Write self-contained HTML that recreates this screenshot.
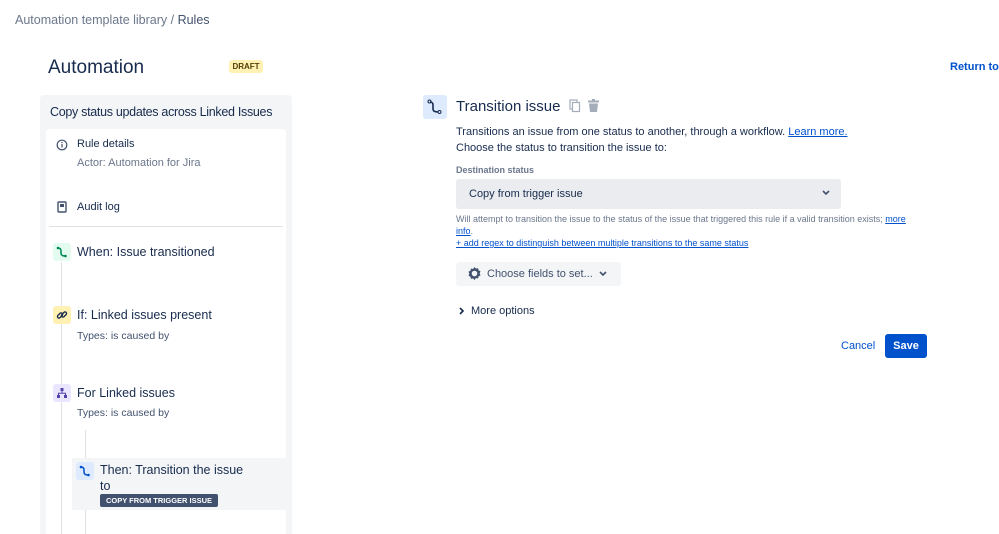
<!DOCTYPE html>
<html><head><style>
*{margin:0;padding:0;box-sizing:border-box}
html,body{width:999px;height:534px;overflow:hidden}
body{background:#fff;font-family:"Liberation Sans",sans-serif;color:#172b4d;position:relative}
.a{position:absolute;white-space:nowrap}
.ic{position:absolute;width:18px;height:18px;border-radius:3px}
</style></head><body>
<div class="a" style="left:15px;top:13px;font-size:12.5px;color:#6b778c">Automation template library / <span style="color:#42526e">Rules</span></div>
<div class="a" style="left:48px;top:57px;font-size:19px;">Automation</div>
<div class="a" style="left:229px;top:60px;width:34px;height:13px;background:#fff0b3;border-radius:3px;font-size:8px;font-weight:bold;text-align:center;line-height:13px;color:#533f04">DRAFT</div>
<div class="a" style="left:950px;top:61px;font-size:11px;color:#0052cc;font-weight:bold">Return to</div>

<div class="a" style="left:40px;top:95px;width:252px;height:450px;background:#f4f5f7;border-radius:4px"></div>
<div class="a" style="left:50px;top:105px;font-size:12.5px;letter-spacing:-0.3px">Copy status updates across Linked Issues</div>
<div class="a" style="left:46px;top:129px;width:240px;height:420px;background:#fff;border-radius:4px"></div>
<div class="a" style="left:49px;top:226px;width:234px;height:1px;background:#dfe1e6"></div>
<div class="a" style="left:61px;top:262px;width:1px;height:280px;background:#dfe1e6"></div>
<div class="a" style="left:85px;top:430px;width:1px;height:110px;background:#dfe1e6"></div>

<svg class="a" style="left:56px;top:139px" width="12" height="12" viewBox="0 0 12 12"><circle cx="6" cy="6" r="4.8" fill="none" stroke="#42526e" stroke-width="1.2"/><rect x="5.4" y="5" width="1.2" height="3.5" fill="#42526e"/><circle cx="6" cy="3.6" r=".7" fill="#42526e"/></svg>
<div class="a" style="left:77px;top:138px;font-size:11px;color:#172b4d">Rule details</div>
<div class="a" style="left:77px;top:157px;font-size:11px;color:#6b778c">Actor: Automation for Jira</div>
<svg class="a" style="left:57px;top:201px" width="10" height="12" viewBox="0 0 10 12"><rect x="1" y="1" width="8" height="10" rx="1" fill="none" stroke="#42526e" stroke-width="1.4"/><rect x="3" y="3" width="4" height="3" fill="#42526e"/></svg>
<div class="a" style="left:77px;top:201px;font-size:11px">Audit log</div>

<div class="ic" style="left:53px;top:243px;background:#e3fcef"></div>
<svg class="a" style="left:56px;top:246px" width="12" height="12" viewBox="0 0 12 12"><path d="M2 2 Q5 2 5 5 L5 7 Q5 10 9 10" fill="none" stroke="#00875a" stroke-width="1.5"/><circle cx="2" cy="2" r="1.3" fill="#00875a"/><circle cx="9.5" cy="10" r="1.3" fill="#00875a"/></svg>
<div class="a" style="left:77px;top:245px;font-size:12.5px">When: Issue transitioned</div>

<div class="ic" style="left:53px;top:306px;background:#fff0b3"></div>
<svg class="a" style="left:56px;top:309px" width="12" height="12" viewBox="0 0 12 12"><g fill="none" stroke="#172b4d" stroke-width="1.3"><rect x="1" y="5" width="6" height="3" rx="1.5" transform="rotate(-45 4 6.5)"/><rect x="5" y="4" width="6" height="3" rx="1.5" transform="rotate(-45 8 5.5)"/></g></svg>
<div class="a" style="left:77px;top:308px;font-size:12.5px">If: Linked issues present</div>
<div class="a" style="left:77px;top:330px;font-size:10.5px;color:#42526e">Types: is caused by</div>

<div class="ic" style="left:53px;top:384px;background:#eae6ff"></div>
<svg class="a" style="left:56px;top:387px" width="12" height="12" viewBox="0 0 12 12"><g fill="#5243aa"><rect x="4.5" y="1" width="3" height="3"/><rect x="1" y="8" width="3" height="3"/><rect x="8" y="8" width="3" height="3"/></g><path d="M6 4V6M2.5 8V6.2H9.5V8" stroke="#5243aa" fill="none"/></svg>
<div class="a" style="left:77px;top:386px;font-size:12.5px">For Linked issues</div>
<div class="a" style="left:77px;top:407px;font-size:10.5px;color:#42526e">Types: is caused by</div>

<div class="a" style="left:72px;top:458px;width:214px;height:52px;background:#f4f5f7"></div>
<div class="ic" style="left:76px;top:462px;background:#deebff"></div>
<svg class="a" style="left:79px;top:465px" width="12" height="12" viewBox="0 0 12 12"><path d="M2 2 Q5 2 5 5 L5 7 Q5 10 9 10" fill="none" stroke="#0052cc" stroke-width="1.5"/><circle cx="2" cy="2" r="1.3" fill="#0052cc"/><circle cx="9.5" cy="10" r="1.3" fill="#0052cc"/></svg>
<div class="a" style="left:100px;top:462px;font-size:12.5px;line-height:16px">Then: Transition the issue<br>to</div>
<div class="a" style="left:100px;top:494px;width:118px;height:13px;background:#42526e;border-radius:2px;color:#fff;font-size:7.5px;font-weight:bold;text-align:center;line-height:13px">COPY FROM TRIGGER ISSUE</div>

<div class="a" style="left:423px;top:95px;width:24px;height:24px;background:#deebff;border-radius:3px"></div>
<svg class="a" style="left:427px;top:99px" width="16" height="16" viewBox="0 0 16 16"><path d="M3 3 Q6 3 6 6 L6 10 Q6 13 11 13" fill="none" stroke="#172b4d" stroke-width="1.6"/><circle cx="2.5" cy="2.5" r="1.5" fill="none" stroke="#172b4d"/><circle cx="12.5" cy="13" r="1.5" fill="none" stroke="#172b4d"/></svg>
<div class="a" style="left:456px;top:98px;font-size:15px">Transition issue</div>
<svg class="a" style="left:569px;top:99px" width="12" height="14" viewBox="0 0 12 14"><rect x="1" y="1" width="7" height="9" fill="none" stroke="#a5adba" stroke-width="1.2"/><rect x="3.5" y="3.5" width="7" height="9" fill="#fff" stroke="#a5adba" stroke-width="1.2"/></svg>
<svg class="a" style="left:587px;top:99px" width="13" height="14" viewBox="0 0 13 14"><rect x="1" y="1.5" width="11" height="2" fill="#a5adba"/><rect x="5" y="0" width="3" height="2" fill="#a5adba"/><path d="M2 4.5H11L10 13H3Z" fill="#a5adba"/></svg>
<div class="a" style="left:456px;top:126px;font-size:11px">Transitions an issue from one status to another, through a workflow. <span style="color:#0052cc;text-decoration:underline">Learn more.</span></div>
<div class="a" style="left:456px;top:142px;font-size:11px">Choose the status to transition the issue to:</div>
<div class="a" style="left:456px;top:165px;font-size:9px;font-weight:bold;color:#6b778c">Destination status</div>
<div class="a" style="left:456px;top:179px;width:385px;height:30px;background:#ebecf0;border-radius:3px"></div>
<div class="a" style="left:469px;top:188px;font-size:11px">Copy from trigger issue</div>
<svg class="a" style="left:822px;top:190px" width="8" height="6" viewBox="0 0 8 6"><path d="M1 1L4 4L7 1" fill="none" stroke="#42526e" stroke-width="1.6"/></svg>
<div class="a" style="left:456px;top:214px;font-size:9px;color:#6b778c">Will attempt to transition the issue to the status of the issue that triggered this rule if a valid transition exists; <span style="color:#0052cc;text-decoration:underline">more</span></div>
<div class="a" style="left:456px;top:226px;font-size:9px;color:#6b778c"><span style="color:#0052cc;text-decoration:underline">info</span>.</div>
<div class="a" style="left:456px;top:238px;font-size:9px;color:#0052cc;text-decoration:underline">+ add regex to distinguish between multiple transitions to the same status</div>
<div class="a" style="left:456px;top:262px;width:165px;height:24px;background:#f4f5f7;border-radius:3px"></div>
<svg class="a" style="left:467px;top:266px" width="15" height="15" viewBox="0 0 16 16"><path d="M8 1l1.5 1.8 2.3-.5.5 2.3 2.1 1-.9 2.2.9 2.2-2.1 1-.5 2.3-2.3-.5L8 15l-1.5-1.8-2.3.5-.5-2.3-2.1-1 .9-2.2-.9-2.2 2.1-1 .5-2.3 2.3.5z" fill="#42526e"/><circle cx="8" cy="8" r="3" fill="#f4f5f7"/></svg>
<div class="a" style="left:487px;top:268px;font-size:11px;color:#42526e">Choose fields to set...</div>
<svg class="a" style="left:599px;top:271px" width="8" height="6" viewBox="0 0 8 6"><path d="M1 1L4 4L7 1" fill="none" stroke="#42526e" stroke-width="1.6"/></svg>
<svg class="a" style="left:459px;top:307px" width="6" height="8" viewBox="0 0 6 8"><path d="M1 1L4 4L1 7" fill="none" stroke="#172b4d" stroke-width="1.6"/></svg>
<div class="a" style="left:471px;top:305px;font-size:11px">More options</div>
<div class="a" style="left:841px;top:340px;font-size:11px;color:#0052cc">Cancel</div>
<div class="a" style="left:885px;top:334px;width:42px;height:24px;background:#0052cc;border-radius:3px;color:#fff;font-size:11px;font-weight:bold;text-align:center;line-height:24px">Save</div>
</body></html>
